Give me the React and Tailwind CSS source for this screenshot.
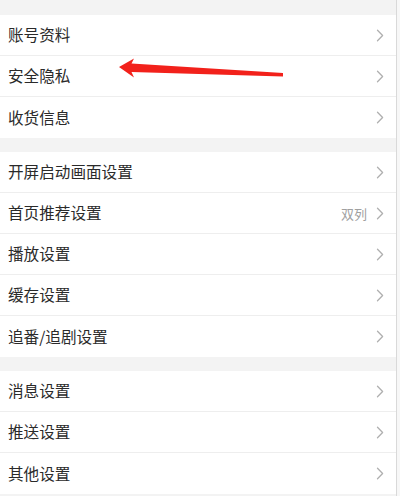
import React from "react";

const sections = [
  [{ t: "账号资料" }, { t: "安全隐私" }, { t: "收货信息" }],
  [
    { t: "开屏启动画面设置" },
    { t: "首页推荐设置", v: "双列" },
    { t: "播放设置" },
    { t: "缓存设置" },
    { t: "追番/追剧设置" },
  ],
  [{ t: "消息设置" }, { t: "推送设置" }, { t: "其他设置" }],
];

function Chevron() {
  return (
    <svg width="8" height="13" viewBox="0 0 8 13" fill="none" className="shrink-0">
      <path d="M1.5 1.2 L6.6 6.5 L1.5 11.8" stroke="#b0b0b0" strokeWidth="1.3" strokeLinecap="round" strokeLinejoin="round" />
    </svg>
  );
}

function Row({ t, v, last }) {
  return (
    <div className={`h-[41px] flex items-center pl-2 pr-[12px] bg-white ${last ? "" : "border-b border-[#eeeeee]"}`}>
      <span className="flex-1 text-[15.6px] text-[#2a2a2a] leading-none">{t}</span>
      {v && <span className="text-[13px] text-[#a0a0a0] mr-[9px] leading-none">{v}</span>}
      <Chevron />
    </div>
  );
}

export default function App() {
  return (
    <div
      className="relative w-[400px] h-[496px] overflow-hidden bg-[#f3f3f3] flex"
      style={{ fontFamily: '"Noto Sans CJK SC", "Noto Sans", sans-serif' }}
    >
      <div className="w-[396px] flex flex-col pt-[15px] gap-[14px]">
        {sections.map((s, i) => (
          <div key={i} className="flex flex-col bg-white">
            {s.map((r, j) => (
              <Row key={j} {...r} last={j === s.length - 1} />
            ))}
          </div>
        ))}
      </div>
      <div className="w-px bg-[#d9d9d9]" />
      <div className="flex-1 bg-[#f7f7f7]" />
      <svg className="absolute left-0 top-0 pointer-events-none" width="400" height="496" viewBox="0 0 400 496">
        <polygon
          points="119,67 134,58.5 131.5,63.5 283,73 283,76.5 131.5,72 134,77.5"
          fill="#f2211b"
        />
      </svg>
    </div>
  );
}
